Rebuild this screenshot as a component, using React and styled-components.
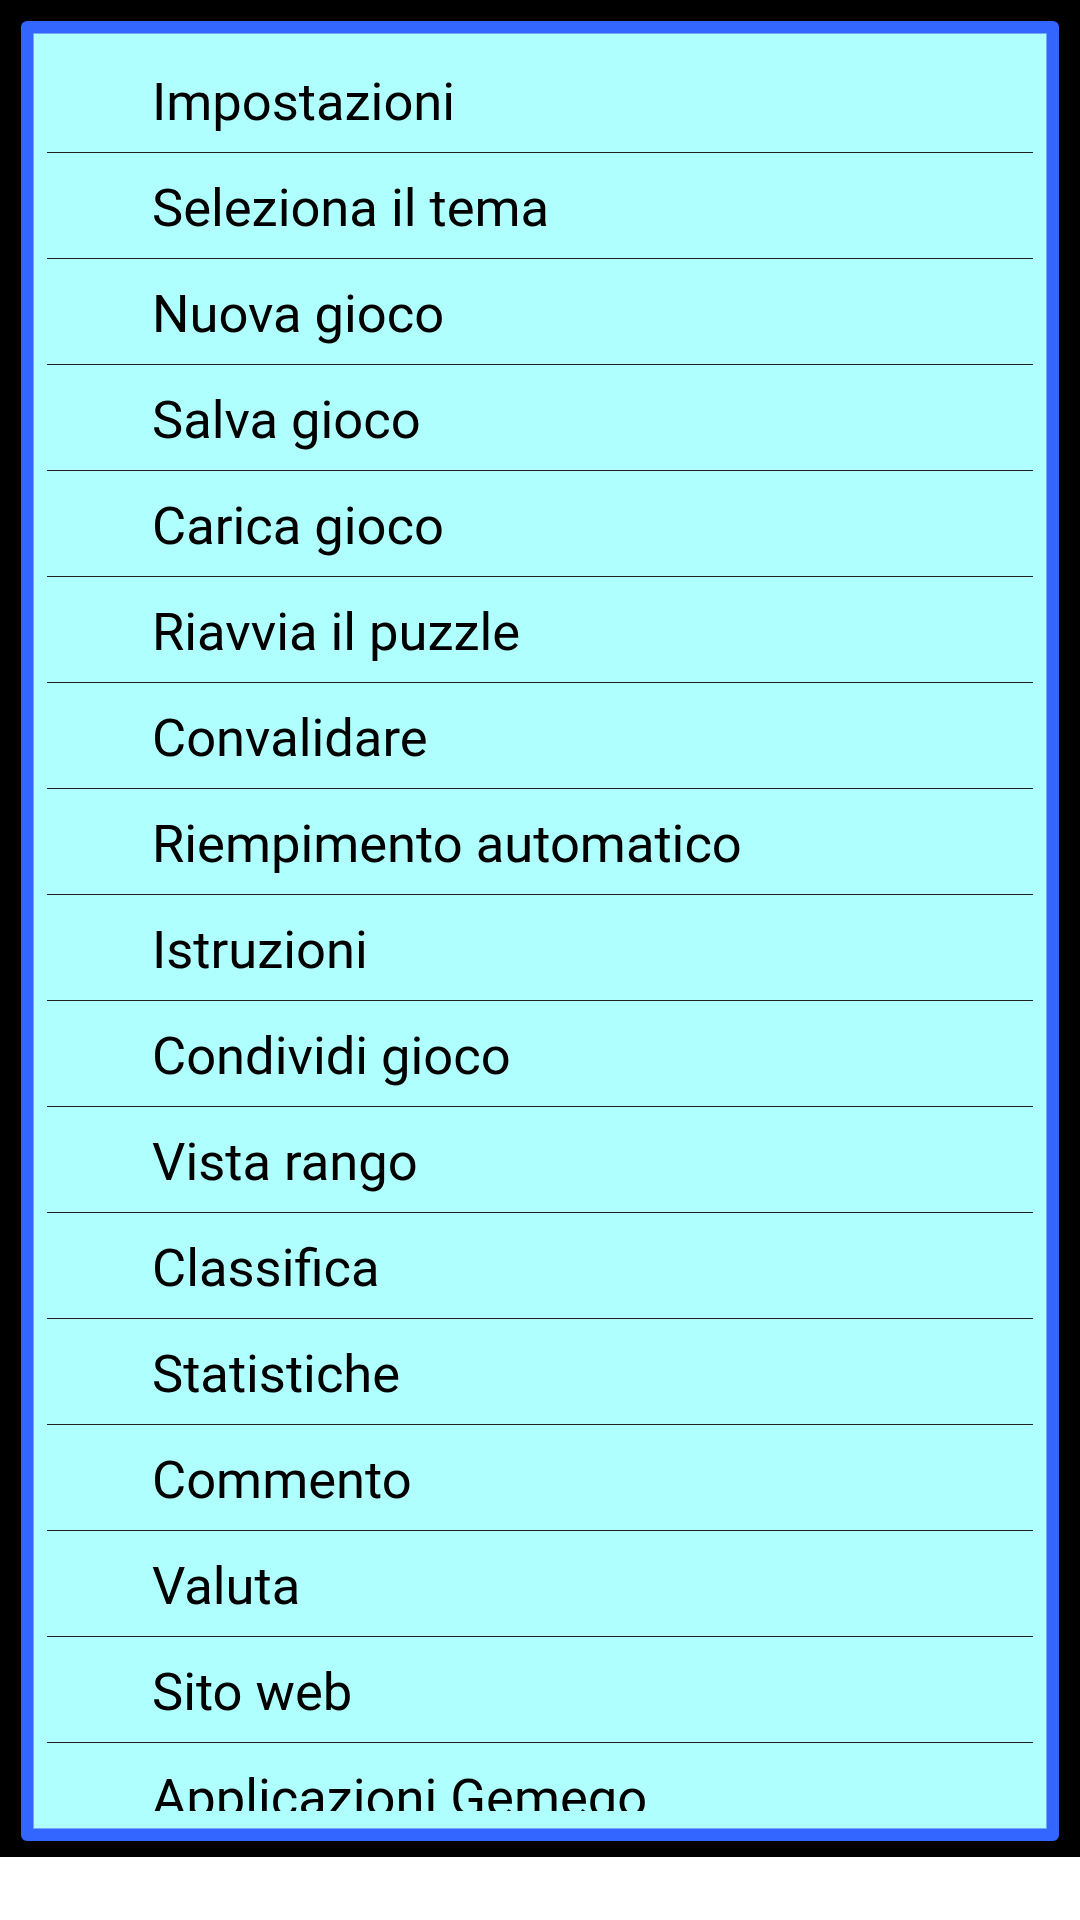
import React from "react";
import styled, { createGlobalStyle } from "styled-components";

const GlobalStyle = createGlobalStyle`
  html, body {
    margin: 0;
    padding: 0;
    background: #ffffff;
  }
  * { box-sizing: border-box; }
`;

const Screen = styled.div`
  width: 1080px;
  height: 1857px;
  background: #000000;
  padding: 21px 21px 16px 21px;
  display: flex;
`;

const Frame = styled.div`
  flex: 1;
  display: flex;
  border: 12px solid #3366ff;
  border-radius: 6px;
  background: #b0ffff;
  box-shadow: inset 0 0 0 1px #78a4ff;
  padding: 14px 14px 18px 14px;
`;

const MenuList = styled.ul`
  flex: 1;
  list-style: none;
  margin: 0;
  padding: 0;
  overflow: hidden;
`;

const MenuItem = styled.li`
  height: 106px;
  border-bottom: 1px solid #222222;
  padding: 7px 0 0 105px;
  font-family: Roboto, "Noto Sans", sans-serif;
  font-size: 52.5px;
  line-height: 96px;
  color: #000000;
  white-space: nowrap;
  &:last-child {
    border-bottom: none;
  }
`;

const items = [
  "Impostazioni",
  "Seleziona il tema",
  "Nuova gioco",
  "Salva gioco",
  "Carica gioco",
  "Riavvia il puzzle",
  "Convalidare",
  "Riempimento automatico",
  "Istruzioni",
  "Condividi gioco",
  "Vista rango",
  "Classifica",
  "Statistiche",
  "Commento",
  "Valuta",
  "Sito web",
  "Applicazioni Gemego",
];

export default function App() {
  return (
    <>
      <GlobalStyle />
      <Screen>
        <Frame>
          <MenuList>
            {items.map((t) => (
              <MenuItem key={t}>{t}</MenuItem>
            ))}
          </MenuList>
        </Frame>
      </Screen>
    </>
  );
}
